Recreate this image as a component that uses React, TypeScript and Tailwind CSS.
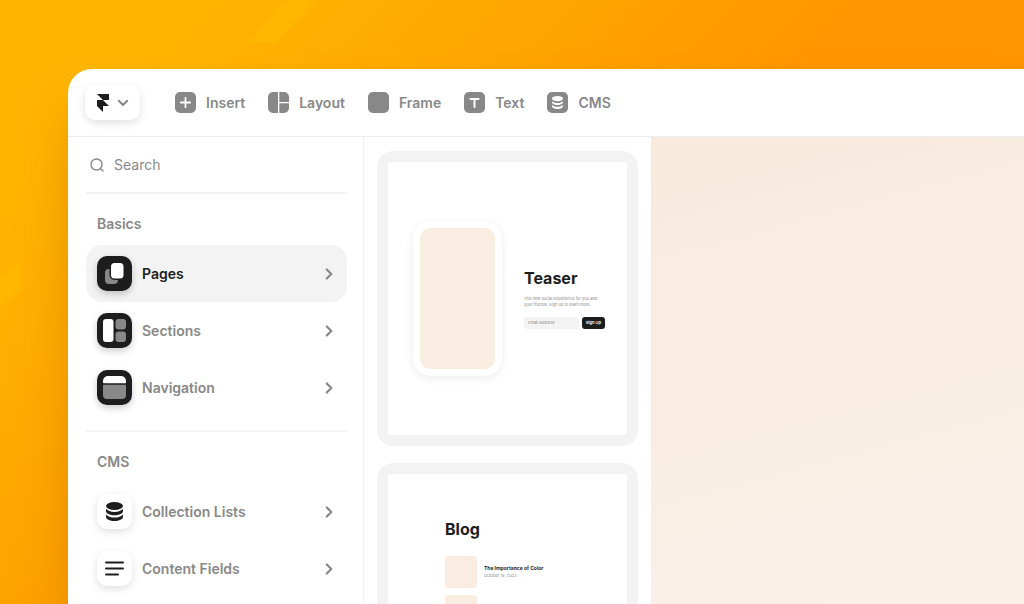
// App.tsx
// Site builder window with the insert panel open

import { useState } from 'react';
import type { ReactNode } from 'react';

interface PanelItem {
  name: string;
  icon: ReactNode;
  dark: boolean;
}

function FramerLogo() {
  return (
    <svg viewBox="4 0 16 24" className="w-3 h-[18px]" fill="#1d1d1d" aria-hidden="true">
      <path d="M4 0h16v8h-8zM4 8h8l8 8H4zM4 16h8v8z" />
    </svg>
  );
}

function ChevronDownIcon() {
  return (
    <svg viewBox="0 0 12 8" className="w-3 h-2" fill="none" stroke="#888" strokeWidth="2" strokeLinecap="round" strokeLinejoin="round" aria-hidden="true">
      <path d="M1.8 1.8 6 6l4.2-4.2" />
    </svg>
  );
}

function ChevronRightIcon() {
  return (
    <svg viewBox="0 0 8 12" className="w-2 h-3" fill="none" stroke="#888" strokeWidth="2.2" strokeLinecap="round" strokeLinejoin="round" aria-hidden="true">
      <path d="M1.8 1.5 6.3 6 1.8 10.5" />
    </svg>
  );
}

function SearchIcon() {
  return (
    <svg viewBox="0 0 14 14" className="w-3.5 h-3.5" fill="none" stroke="#888" strokeWidth="1.4" strokeLinecap="round" aria-hidden="true">
      <circle cx="6.5" cy="6.5" r="5.5" />
      <path d="m11 11 2 2" />
    </svg>
  );
}

const toolIcons = {
  insert: (
    <>
      <rect width="21" height="21" rx="5" fill="#888" />
      <path d="M10.5 5.8v9.4M5.8 10.500h9.400" stroke="#fff" strokeWidth="1.8" strokeLinecap="round" />
    </>
  ),
  layout: (
    <>
      <path d="M5 0h5v21H5a5 5 0 0 1-5-5V5a5 5 0 0 1 5-5z" fill="#888" />
      <path d="M11.300 0H16a5 5 0 0 1 5 5v5h-9.700z" fill="#888" />
      <path d="M11.300 11.300H21V16a5 5 0 0 1-5 5h-4.700z" fill="#888" />
    </>
  ),
  frame: <rect width="21" height="21" rx="5" fill="#888" />,
  text: (
    <>
      <rect width="21" height="21" rx="5" fill="#888" />
      <path d="M6.400 6.900h8.200M10.500 6.900v8" stroke="#fff" strokeWidth="2" strokeLinecap="round" />
    </>
  ),
  cms: (
    <>
      <rect width="21" height="21" rx="5" fill="#888" />
      <ellipse cx="10.500" cy="6.600" rx="5.500" ry="2.600" fill="#fff" />
      <path d="M5 9c1 1.400 3 2 5.500 2s4.500-.6 5.500-2v1.300c0 1.500-2.500 2.700-5.500 2.700S5 11.800 5 10.300z" fill="#fff" />
      <path d="M5 12.800c1 1.400 3 2 5.500 2s4.500-.6 5.500-2v1.400c0 1.500-2.500 2.700-5.500 2.700S5 15.700 5 14.200z" fill="#fff" />
    </>
  ),
};

const tools = [
  { name: 'Insert', icon: toolIcons.insert },
  { name: 'Layout', icon: toolIcons.layout },
  { name: 'Frame', icon: toolIcons.frame },
  { name: 'Text', icon: toolIcons.text },
  { name: 'CMS', icon: toolIcons.cms },
];

const basics: PanelItem[] = [
  {
    name: 'Pages',
    dark: true,
    icon: (
      <>
        <rect x="8" y="13" width="13" height="15" rx="4" fill="#888" />
        <rect x="12.500" y="5.500" width="15.500" height="18.500" rx="5" fill="#1d1d1d" />
        <rect x="14" y="7" width="12.500" height="15.500" rx="3.500" fill="#fff" />
      </>
    ),
  },
  {
    name: 'Sections',
    dark: true,
    icon: (
      <>
        <rect x="6" y="6" width="10.500" height="23" rx="3" fill="#fff" />
        <rect x="18.500" y="6" width="10.500" height="10.500" rx="3" fill="#888" />
        <rect x="18.500" y="18.500" width="10.500" height="10.500" rx="3" fill="#888" />
      </>
    ),
  },
  {
    name: 'Navigation',
    dark: true,
    icon: (
      <>
        <path d="M6 12.500V11a5 5 0 0 1 5-5h13a5 5 0 0 1 5 5v1.500a.8.8 0 0 1-.8.8H6.800a.8.8 0 0 1-.8-.8z" fill="#fff" />
        <path d="M6.800 14.800h21.400a.8.8 0 0 1 .8.8V25a4 4 0 0 1-4 4H10a4 4 0 0 1-4-4v-9.400a.8.8 0 0 1 .8-.8z" fill="#888" />
      </>
    ),
  },
];

const cms: PanelItem[] = [
  {
    name: 'Collection Lists',
    dark: false,
    icon: (
      <g fill="#1d1d1d">
        <ellipse cx="17.500" cy="12" rx="8.500" ry="4" />
        <path d="M9 14.800c1.500 2.100 4.700 3.100 8.500 3.100s7-1 8.500-3.100v2.500c0 2.200-3.800 4-8.500 4s-8.500-1.800-8.500-4z" />
        <path d="M9 20.400c1.500 2.100 4.700 3.100 8.500 3.100s7-1 8.500-3.100v2.500c0 2.200-3.800 4-8.500 4s-8.500-1.800-8.500-4z" />
      </g>
    ),
  },
  {
    name: 'Content Fields',
    dark: false,
    icon: (
      <path d="M9 11.500h17M9 17.500h17M9 23.500h12" stroke="#1d1d1d" strokeWidth="2" strokeLinecap="round" />
    ),
  },
];

// Faint diagonal streaks on the orange backdrop
function BackdropStreaks() {
  return (
    <svg className="absolute left-0 top-0 w-[330px] h-[320px]" viewBox="0 0 330 320" fill="#ffb700" aria-hidden="true">
      <path d="M285 0h31l-41 43h-27z" />
      <path d="m0 278 21-18v30L0 307z" />
    </svg>
  );
}

function Toolbar() {
  return (
    <header className="flex items-center h-[68px] shrink-0 pl-[17px] border-b border-[#efefef]">
      <button
        type="button"
        aria-label="Main menu"
        className="flex items-center justify-center gap-2 w-[55px] h-[35px] rounded-[10px] bg-white shadow-[0_3px_8px_rgba(0,0,0,0.12)]"
      >
        <FramerLogo />
        <ChevronDownIcon />
      </button>
      <nav className="flex items-center gap-[23px] ml-[35px]">
        {tools.map(tool => (
          <button key={tool.name} type="button" className="flex items-center gap-2.5 font-semibold">
            <svg viewBox="0 0 21 21" className="w-[21px] h-[21px]" fill="none" aria-hidden="true">
              {tool.icon}
            </svg>
            {tool.name}
          </button>
        ))}
      </nav>
    </header>
  );
}

interface PanelSectionProps {
  title: string;
  items: PanelItem[];
  active: string;
  onSelect: (name: string) => void;
}

function PanelSection({ title, items, active, onSelect }: PanelSectionProps) {
  return (
    <section>
      <h2 className="pt-5 pb-[11px] pl-[11px] font-semibold">{title}</h2>
      {items.map(item => (
        <button
          key={item.name}
          type="button"
          onClick={() => onSelect(item.name)}
          className={`flex items-center w-full h-[57px] pl-[11px] pr-3.5 rounded-2xl font-semibold ${
            active === item.name ? 'bg-[#f3f3f3] text-[#1d1d1d]' : ''
          }`}
        >
          <svg
            viewBox="0 0 35 35"
            fill="none"
            aria-hidden="true"
            className={`w-[35px] h-[35px] mr-2.5 rounded-[10px] ${
              item.dark
                ? 'bg-[#1d1d1d] shadow-[0_3px_7px_rgba(0,0,0,0.2)]'
                : 'bg-white shadow-[0_3px_8px_rgba(0,0,0,0.12)]'
            }`}
          >
            {item.icon}
          </svg>
          <span className="mr-auto">{item.name}</span>
          <ChevronRightIcon />
        </button>
      ))}
    </section>
  );
}

function InsertPanel() {
  const [active, setActive] = useState('Pages');
  const [query, setQuery] = useState('');

  return (
    <aside className="w-[296px] shrink-0 pl-[18px] pr-4 border-r border-[#f3f3f3]">
      <label className="flex items-center gap-2.5 h-[57px] pl-1 border-b-2 border-[#f3f3f3]">
        <SearchIcon />
        <input
          type="text"
          aria-label="Search"
          placeholder="Search"
          value={query}
          onChange={e => setQuery(e.target.value)}
          className="min-w-0 flex-1 outline-none placeholder:text-[#888]"
        />
      </label>
      <PanelSection title="Basics" items={basics} active={active} onSelect={setActive} />
      <hr className="mt-3.5 border-t-2 border-[#f5f5f5]" />
      <PanelSection title="CMS" items={cms} active={active} onSelect={setActive} />
    </aside>
  );
}

function TeaserPreview() {
  return (
    <article className="p-[11px] rounded-2xl bg-[#f3f3f3]">
      <div className="flex items-center h-[273px] pl-[25px] gap-[22px] rounded bg-white">
        <div className="w-[89px] h-[155px] p-[7px] rounded-[18px] bg-white shadow-[0_2px_10px_rgba(0,0,0,0.08)]">
          <div className="h-full rounded-[11px] bg-[#f9ece0]" />
        </div>
        <div className="w-[81px] text-[#1d1d1d]">
          <h3 className="text-base leading-5 font-bold">Teaser</h3>
          <p className="mt-2 text-[4px] leading-[6px] text-[#888] whitespace-nowrap">
            The new social experience for you and
            <br />
            your friends. Sign up to learn more.
          </p>
          <form className="flex gap-[3px] mt-[9px] text-[4px] leading-3" onSubmit={e => e.preventDefault()}>
            <input
              type="email"
              aria-label="Email address"
              placeholder="Email address"
              className="min-w-0 flex-1 h-3 px-1 rounded-[3px] bg-[#f3f3f3] placeholder:text-[#888]"
            />
            <button type="submit" className="w-[23px] h-3 rounded-[3px] bg-[#1d1d1d] text-white font-semibold">
              Sign Up
            </button>
          </form>
        </div>
      </div>
    </article>
  );
}

function BlogPreview() {
  return (
    <article className="p-[11px] rounded-2xl bg-[#f3f3f3]">
      <div className="h-[273px] pl-[57px] pt-[45px] rounded bg-white overflow-hidden text-[#1d1d1d]">
        <h3 className="text-base leading-5 font-bold">Blog</h3>
        <div className="flex items-center gap-[7px] mt-[17px]">
          <div className="w-8 h-8 rounded bg-[#f9ece0]" />
          <div>
            <h4 className="text-[5px] leading-[8px] font-bold">The Importance of Color</h4>
            <p className="text-[4px] leading-[8px] text-[#888]">October 19, 2023</p>
          </div>
        </div>
        <div className="w-8 h-8 mt-[7px] rounded bg-[#f9ece0]" />
      </div>
    </article>
  );
}

export default function App() {
  return (
    <div className="relative flex h-screen pt-[69px] pl-[68px] overflow-hidden bg-[linear-gradient(135deg,#ffb500_140px,#ffa800_350px,#ff9500_620px)] font-['Inter',sans-serif] text-sm text-[#888]">
      <BackdropStreaks />
      <div className="relative flex flex-col flex-1 min-w-0 rounded-tl-3xl bg-white overflow-hidden shadow-[0_40px_50px_rgba(190,110,0,0.4)]">
        <Toolbar />
        <main className="flex flex-1 min-h-0">
          <InsertPanel />
          <section aria-label="Templates" className="flex flex-col gap-[17px] w-[287px] shrink-0 px-[13px] pt-3.5">
            <TeaserPreview />
            <BlogPreview />
          </section>
          <div className="flex-1 bg-[linear-gradient(165deg,#f8eadd,#faf0e8)]" />
        </main>
      </div>
    </div>
  );
}
